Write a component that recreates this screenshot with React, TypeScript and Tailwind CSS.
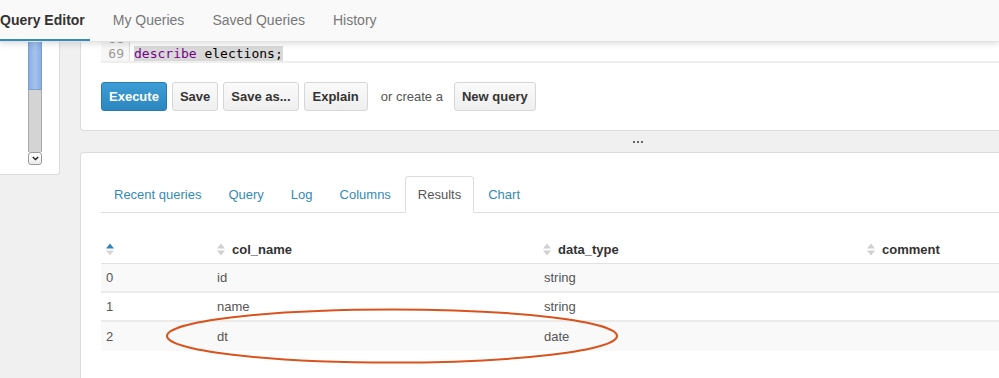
import React from "react";

function SortIcon({ active = false }: { active?: boolean }) {
  return (
    <svg width="8" height="13" viewBox="0 0 8 13" className="shrink-0">
      <polygon points="0,5.5 4,0.5 8,5.5" fill={active ? "#3484c0" : "#d0d0d0"} />
      <polygon points="0,7.5 4,12.5 8,7.5" fill={active ? "#d8d8d8" : "#d0d0d0"} />
    </svg>
  );
}

const btn =
  "h-[29px] px-[7px] rounded-[3px] border border-[#d6d6d6] bg-gradient-to-b from-[#fafafa] to-[#efefef] text-[13px] font-bold text-[#333] flex items-center";

export default function App() {
  const rows = [
    ["0", "id", "string", ""],
    ["1", "name", "string", ""],
    ["2", "dt", "date", ""],
  ];
  return (
    <div className="relative w-[999px] h-[378px] overflow-hidden bg-[#f0f0f0] font-['Liberation_Sans',Arial,sans-serif]">
      {/* top nav */}
      <nav className="relative z-10 h-[42px] bg-[#f9f9f9] border-b border-[#e2e2e2] shadow-[0_2px_6px_rgba(0,0,0,0.13)] flex text-[14px]">
        <div className="h-[41px] flex items-center pr-[5px] border-b-2 border-[#338bb8] font-bold text-[#333] pt-[2px]">
          Query Editor
        </div>
        <div className="h-[41px] flex items-center ml-[9px] px-[14px] text-[#777]">My Queries</div>
        <div className="h-[41px] flex items-center px-[14px] text-[#777]">Saved Queries</div>
        <div className="h-[41px] flex items-center px-[14px] text-[#777]">History</div>
      </nav>

      {/* main area (scrolled) */}
      <div className="flex items-start -mt-[20px]">
        {/* left sidebar */}
        <div className="w-[60px] h-[153px] bg-white border-r border-b border-[#dcdcdc] rounded-br-[3px] shrink-0">
          <div className="ml-[28px] w-[14px] flex flex-col">
            <div className="h-[68px] bg-gradient-to-r from-[#8aaee3] via-[#a6c3ee] to-[#8aaee3] border-x border-b border-[#7d9fd0]" />
            <div className="h-[62px] bg-[#d4d4d4] border-x border-[#a9a9a9]" />
            <div className="h-[13px] bg-gradient-to-b from-white to-[#ececec] border border-[#9a9a9a] rounded-[3px] flex items-center justify-center">
              <svg width="7" height="5" viewBox="0 0 7 5">
                <path d="M0.8 1 L3.5 3.6 L6.2 1" fill="none" stroke="#222" strokeWidth="1.4" />
              </svg>
            </div>
          </div>
        </div>

        {/* right column */}
        <div className="ml-[20px] flex-1 flex flex-col">
          {/* editor card */}
          <div className="bg-white border border-r-0 border-[#dcdcdc] rounded-bl-[4px] pt-[8px] pb-[19px] pl-[20px]">
            <div className="border-b-2 border-[#eeeeee] font-['DejaVu_Sans_Mono',monospace] text-[13px] leading-[15px]">
              <div className="flex">
                <div className="w-[29px] bg-[#f7f7f7] border-r border-[#dddddd] text-right pr-[5px] text-[#999]">68</div>
                <div className="pl-[4px]">&nbsp;</div>
              </div>
              <div className="flex">
                <div className="w-[29px] bg-[#f7f7f7] border-r border-[#dddddd] text-right pr-[5px] text-[#999]">69</div>
                <div className="pl-[4px]">
                  <span className="bg-[#d9d9d9]">
                    <span className="text-[#770088]">describe</span>
                    <span className="text-[#000]"> elections;</span>
                  </span>
                </div>
              </div>
            </div>
            <div className="mt-[19px] flex items-center gap-[5px]">
              <button className="h-[29px] px-[7px] rounded-[3px] border border-[#2a7cb0] bg-gradient-to-b from-[#3d9dd4] to-[#2d86bf] text-[13px] font-bold text-white flex items-center">
                Execute
              </button>
              <button className={btn}>Save</button>
              <button className={btn}>Save as...</button>
              <button className="h-[29px] px-[8px] rounded-[3px] border border-[#d6d6d6] bg-gradient-to-b from-[#fafafa] to-[#efefef] text-[13px] font-bold text-[#333] flex items-center">
                Explain
              </button>
              <span className="ml-[8px] mr-[6px] text-[13px] text-[#555]">or create a</span>
              <button className={btn}>New query</button>
            </div>
          </div>

          {/* splitter */}
          <div className="h-[21px] flex items-center pl-[553px]">
            <div className="flex gap-[2px]">
              <div className="w-[2px] h-[2px] bg-[#666]" />
              <div className="w-[2px] h-[2px] bg-[#666]" />
              <div className="w-[2px] h-[2px] bg-[#666]" />
            </div>
          </div>

          {/* results card */}
          <div className="bg-white border-l border-t border-[#dcdcdc] rounded-tl-[4px] pt-[23px] pl-[20px] h-[240px]">
            <div className="flex border-b border-[#dddddd] text-[13px]">
              {["Recent queries", "Query", "Log", "Columns", "Results", "Chart"].map((t, i) =>
                t === "Results" ? (
                  <div
                    key={t}
                    className="-mb-px mr-[2px] px-[11.5px] pt-[8px] pb-[7px] leading-5 border border-[#dddddd] border-b-white rounded-t-[4px] bg-white text-[#555]"
                  >
                    {t}
                  </div>
                ) : (
                  <div
                    key={t}
                    className={
                      "-mb-px mr-[2px] px-[11.5px] pt-[8px] pb-[7px] leading-5 border border-transparent text-[#338bb8] " +
                      (i === 0 ? "pl-[12px]" : "")
                    }
                  >
                    {t}
                  </div>
                )
              )}
            </div>

            <div className="mt-[23px] text-[13px]">
              <div className="grid grid-cols-[110px_327px_323px_1fr] h-[28px] border-b border-[#e2e2e2] items-center font-bold text-[#333]">
                <div className="pl-[5px] flex items-center">
                  <SortIcon active />
                </div>
                <div className="pl-[6px] flex items-center gap-[7px]">
                  <SortIcon />
                  <span>col_name</span>
                </div>
                <div className="pl-[5px] flex items-center gap-[7px]">
                  <SortIcon />
                  <span>data_type</span>
                </div>
                <div className="pl-[6px] flex items-center gap-[7px]">
                  <SortIcon />
                  <span>comment</span>
                </div>
              </div>
              {rows.map((r, i) => (
                <div
                  key={r[0]}
                  className={
                    "grid grid-cols-[110px_327px_323px_1fr] h-[29px] items-center text-[#555] " +
                    (i < rows.length - 1 ? "border-b-2 border-[#ebebeb] " : "") +
                    (i % 2 === 0 ? "bg-[#f9f9f9]" : "bg-white")
                  }
                >
                  <div className="pl-[5px]">{r[0]}</div>
                  <div className="pl-[6px]">{r[1]}</div>
                  <div className="pl-[6px]">{r[2]}</div>
                  <div className="pl-[6px]">{r[3]}</div>
                </div>
              ))}
            </div>
          </div>
        </div>
      </div>

      {/* annotation ellipse */}
      <svg
        className="absolute left-[165px] top-[307px] pointer-events-none"
        width="456"
        height="58"
        viewBox="0 0 456 58"
      >
        <ellipse cx="227" cy="29" rx="225" ry="26.5" fill="none" stroke="#d9531e" strokeWidth="2" />
      </svg>
    </div>
  );
}
